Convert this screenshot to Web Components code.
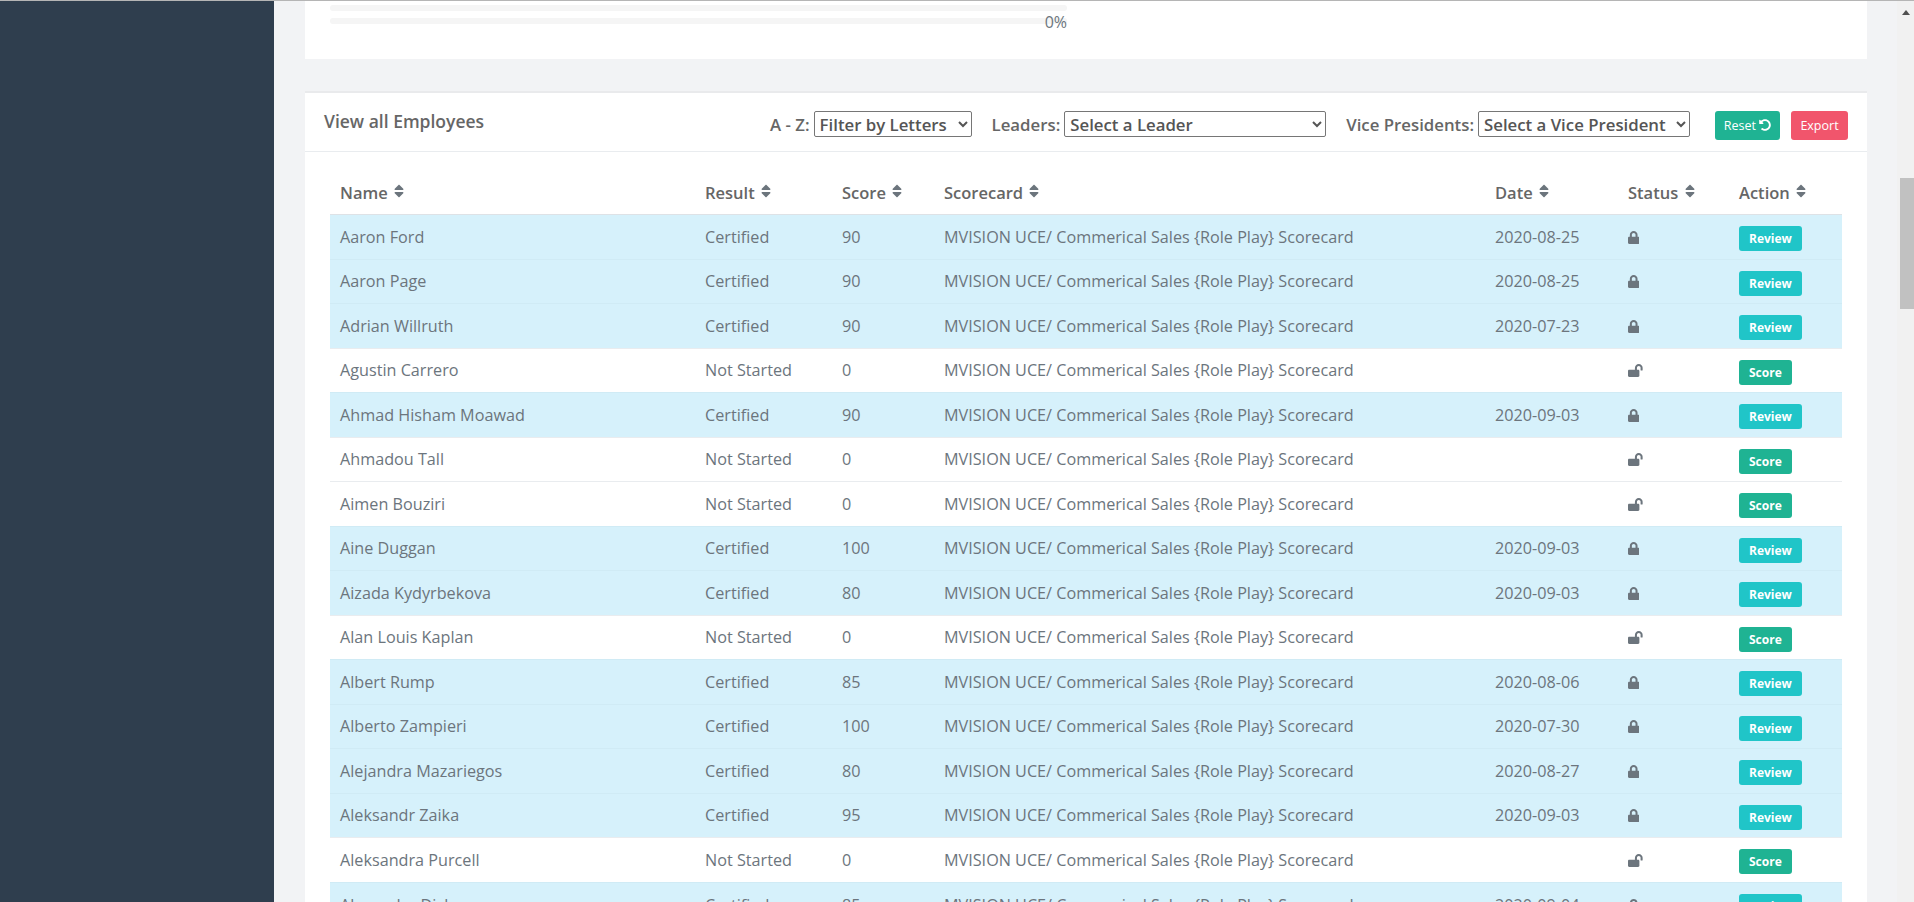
<!DOCTYPE html>
<html lang="en">
<head>
<meta charset="utf-8">
<title>View all Employees</title>
<style>
    html, body { margin: 0; height: 100%; overflow: hidden; }
    body { font-family: "Open Sans", "Liberation Sans", sans-serif; font-size: 16px; color: #6c757d; }
</style>
</head>
<body>
<app-shell>
    <progress-card></progress-card>
    <employees-card>
        <span slot="title">View all Employees</span>
        <filter-bar slot="filters"></filter-bar>
        <employee-table></employee-table>
    </employees-card>
</app-shell>

<script>
const ICONS = {
    sort: ['0 0 320 512', 'M41 288h238c21.4 0 32.1 25.9 17 41L177 448c-9.4 9.4-24.6 9.4-33.9 0L24 329c-15.1-15.1-4.4-41 17-41zm255-105L177 64c-9.4-9.4-24.6-9.4-33.9 0L24 183c-15.1 15.1-4.4 41 17 41h238c21.4 0 32.1-25.9 17-41z'],
    lock: ['0 0 448 512', 'M400 224h-24v-72C376 68.2 307.8 0 224 0S72 68.2 72 152v72H48c-26.5 0-48 21.5-48 48v192c0 26.5 21.5 48 48 48h352c26.5 0 48-21.5 48-48V272c0-26.5-21.5-48-48-48zm-104 0H152v-72c0-39.7 32.3-72 72-72s72 32.3 72 72v72z'],
    open: ['0 0 576 512', 'M423.5 0C339.5.3 272 69.5 272 153.5V224H48c-26.5 0-48 21.5-48 48v192c0 26.5 21.5 48 48 48h352c26.5 0 48-21.5 48-48V272c0-26.5-21.5-48-48-48h-48v-71.1c0-39.6 31.7-72.5 71.3-72.9 40-.4 72.7 32.1 72.7 72v80c0 13.3 10.7 24 24 24h32c13.3 0 24-10.7 24-24v-80C576 68 507.5-.3 423.5 0z'],
    undo: ['0 0 512 512', 'M255.545 8c-66.269.119-126.438 26.233-170.86 68.685L48.971 40.971C33.851 25.851 8 36.559 8 57.941V192c0 13.255 10.745 24 24 24h134.059c21.382 0 32.09-25.851 16.971-40.971l-41.75-41.75c30.864-28.899 70.801-44.907 113.23-45.273 92.398-.798 170.283 73.977 169.484 169.442C423.236 348.009 349.816 424 256 424c-41.127 0-79.997-14.678-110.63-41.556-4.743-4.161-11.906-3.908-16.368.553L89.34 422.659c-4.872 4.872-4.631 12.815.482 17.433C133.798 479.813 192.074 504 256 504c136.966 0 247.999-111.033 248-247.998C504.001 119.193 392.354 7.755 255.545 8z']
};

function icon(name, height) {
    const [box, d] = ICONS[name];
    return `<svg viewBox="${box}" height="${height}" fill="currentColor" style="display:inline-block;vertical-align:-1px"><path d="${d}"/></svg>`;
}

class AppShell extends HTMLElement {
    constructor() {
        super();
        this.attachShadow({ mode: 'open' });
        this.shadowRoot.innerHTML = `
            <style>
                :host { display: flex; height: 902px; overflow: hidden; border-top: 1px solid #b5b5b5; box-sizing: border-box; background: #f2f3f5; }
                nav { flex: 0 0 274px; background: #2f3e4e; }
                main { flex: 1; min-width: 0; padding: 0 30px 0 31px; display: flex; flex-direction: column; gap: 32px; }
                ::slotted(*) { flex-shrink: 0; }
                .scrollbar { flex: 0 0 17px; background: #f1f1f1; position: relative; }
                .up { width: 0; height: 0; margin: 9px auto 0; border: 4px solid transparent; border-top: 0; border-bottom: 5px solid #505050; }
                .thumb { position: absolute; left: 3px; right: 0; top: 177px; height: 131px; background: #c1c1c1; }
            </style>
            <nav></nav>
            <main><slot></slot></main>
            <div class="scrollbar"><div class="up"></div><div class="thumb"></div></div>
        `;
    }
}

class ProgressCard extends HTMLElement {
    constructor() {
        super();
        this.attachShadow({ mode: 'open' });
        this.shadowRoot.innerHTML = `
            <style>
                :host { display: block; height: 58px; background: #fff; padding: 4px 0 0 25px; box-sizing: border-box; }
                .wrap { width: 737px; position: relative; }
                .bar { height: 6px; border-radius: 3px; background: #f5f5f5; margin-bottom: 7px; }
                .pct { position: absolute; right: 0; top: 7px; font-size: 16px; line-height: 20px; color: #6c757d; }
            </style>
            <div class="wrap">
                <div class="bar"></div>
                <div class="bar"></div>
                <span class="pct">0%</span>
            </div>
        `;
    }
}

class EmployeesCard extends HTMLElement {
    constructor() {
        super();
        this.attachShadow({ mode: 'open' });
        this.shadowRoot.innerHTML = `
            <style>
                :host { display: block; background: #fff; border-top: 2px solid #e9eaec; }
                header { height: 59px; box-sizing: border-box; border-bottom: 1px solid #e9ecef; display: flex; align-items: flex-start; justify-content: space-between; padding: 0 19px 0 19px; }
                .title { font-size: 17.5px; font-weight: 600; color: #666; line-height: 24px; margin-top: 16px; }
                .body { padding: 19px 25px 0; }
            </style>
            <header>
                <div class="title"><slot name="title"></slot></div>
                <slot name="filters"></slot>
            </header>
            <div class="body"><slot></slot></div>
        `;
    }
}

class FilterBar extends HTMLElement {
    constructor() {
        super();
        this.attachShadow({ mode: 'open' });
        this.shadowRoot.innerHTML = `
            <style>
                :host { display: flex; align-items: flex-start; padding-top: 18px; }
                label { font-size: 16.8px; font-weight: 600; color: #666; display: flex; align-items: center; gap: 4px; margin-right: 20px; height: 26px; }
                select { font: 600 16.8px "Open Sans", "Liberation Sans", sans-serif; color: #555; background: #fff; border: 1px solid #767676; border-radius: 2px; height: 26px; padding: 0 0 0 1px; }
                .letters { width: 158px; }
                .leader { width: 262px; }
                .vp { width: 212px; }
                label.last { margin-right: 25px; }
                button { font: 400 12.5px "Open Sans", "Liberation Sans", sans-serif; color: #fff; border: 0; border-radius: 3px; height: 29px; padding: 0; }
                .reset { width: 65px; background: #1fb393; margin-right: 11px; }
                .export { width: 57px; background: #f1556c; }
            </style>
            <label>A - Z:<select class="letters"><option>Filter by Letters</option></select></label>
            <label>Leaders:<select class="leader"><option>Select a Leader</option></select></label>
            <label class="last">Vice Presidents:<select class="vp"><option>Select a Vice President</option></select></label>
            <button class="reset">Reset ${icon('undo', 12)}</button>
            <button class="export">Export</button>
        `;
    }
}

const CARD = 'MVISION UCE/ Commerical Sales {Role Play} Scorecard';
const EMPLOYEES = [
    ['Aaron Ford', 'Certified', 90, '2020-08-25'],
    ['Aaron Page', 'Certified', 90, '2020-08-25'],
    ['Adrian Willruth', 'Certified', 90, '2020-07-23'],
    ['Agustin Carrero', 'Not Started', 0, ''],
    ['Ahmad Hisham Moawad', 'Certified', 90, '2020-09-03'],
    ['Ahmadou Tall', 'Not Started', 0, ''],
    ['Aimen Bouziri', 'Not Started', 0, ''],
    ['Aine Duggan', 'Certified', 100, '2020-09-03'],
    ['Aizada Kydyrbekova', 'Certified', 80, '2020-09-03'],
    ['Alan Louis Kaplan', 'Not Started', 0, ''],
    ['Albert Rump', 'Certified', 85, '2020-08-06'],
    ['Alberto Zampieri', 'Certified', 100, '2020-07-30'],
    ['Alejandra Mazariegos', 'Certified', 80, '2020-08-27'],
    ['Aleksandr Zaika', 'Certified', 95, '2020-09-03'],
    ['Aleksandra Purcell', 'Not Started', 0, ''],
    ['Alexander Dishrow', 'Certified', 85, '2020-09-04']
];

class EmployeeTable extends HTMLElement {
    constructor() {
        super();
        this.attachShadow({ mode: 'open' });
        const heads = ['Name', 'Result', 'Score', 'Scorecard', 'Date', 'Status', 'Action'];
        const rows = EMPLOYEES.map(([name, result, score, date]) => {
            const done = result === 'Certified';
            return `<tr class="${done ? 'done' : ''}">
                <td>${name}</td><td>${result}</td><td>${score}</td><td>${CARD}</td><td>${date}</td>
                <td class="st">${icon(done ? 'lock' : 'open', 13)}</td>
                <td><a class="${done ? 'review' : 'score'}">${done ? 'Review' : 'Score'}</a></td>
            </tr>`;
        }).join('');
        this.shadowRoot.innerHTML = `
            <style>
                :host { display: block; }
                table { border-collapse: collapse; table-layout: fixed; width: 1512px; }
                th { height: 43.5px; box-sizing: border-box; text-align: left; font-size: 16.5px; font-weight: 600; color: #666; padding: 0 10px; border-bottom: 1px solid #dee2e6; white-space: nowrap; }
                th svg { margin-left: 2px; color: #6c757d; vertical-align: 0 !important; }
                td { height: 44.5px; box-sizing: border-box; padding: 0 10px; font-size: 16.2px; color: #6c757d; border-top: 1px solid #e9ecef; white-space: nowrap; }
                tr.done td { background: #d6f1fb; border-top-color: #d0ebf5; }
                .st { color: #6c757d; }
                a { display: inline-block; font-size: 12px; font-weight: 700; color: #fff; height: 25px; line-height: 25px; padding: 0 10px; border-radius: 3px; vertical-align: middle; margin-top: 4px; }
                .review { background: #20c5c8; }
                .score { background: #1fb393; }
            </style>
            <table>
                <colgroup><col style="width:365px"><col style="width:137px"><col style="width:102px"><col style="width:551px"><col style="width:133px"><col style="width:111px"><col style="width:113px"></colgroup>
                <thead><tr>${heads.map(h => `<th>${h} ${icon('sort', 16)}</th>`).join('')}</tr></thead>
                <tbody>${rows}</tbody>
            </table>
        `;
    }
}

customElements.define('app-shell', AppShell);
customElements.define('progress-card', ProgressCard);
customElements.define('employees-card', EmployeesCard);
customElements.define('filter-bar', FilterBar);
customElements.define('employee-table', EmployeeTable);
</script>
</body>
</html>
